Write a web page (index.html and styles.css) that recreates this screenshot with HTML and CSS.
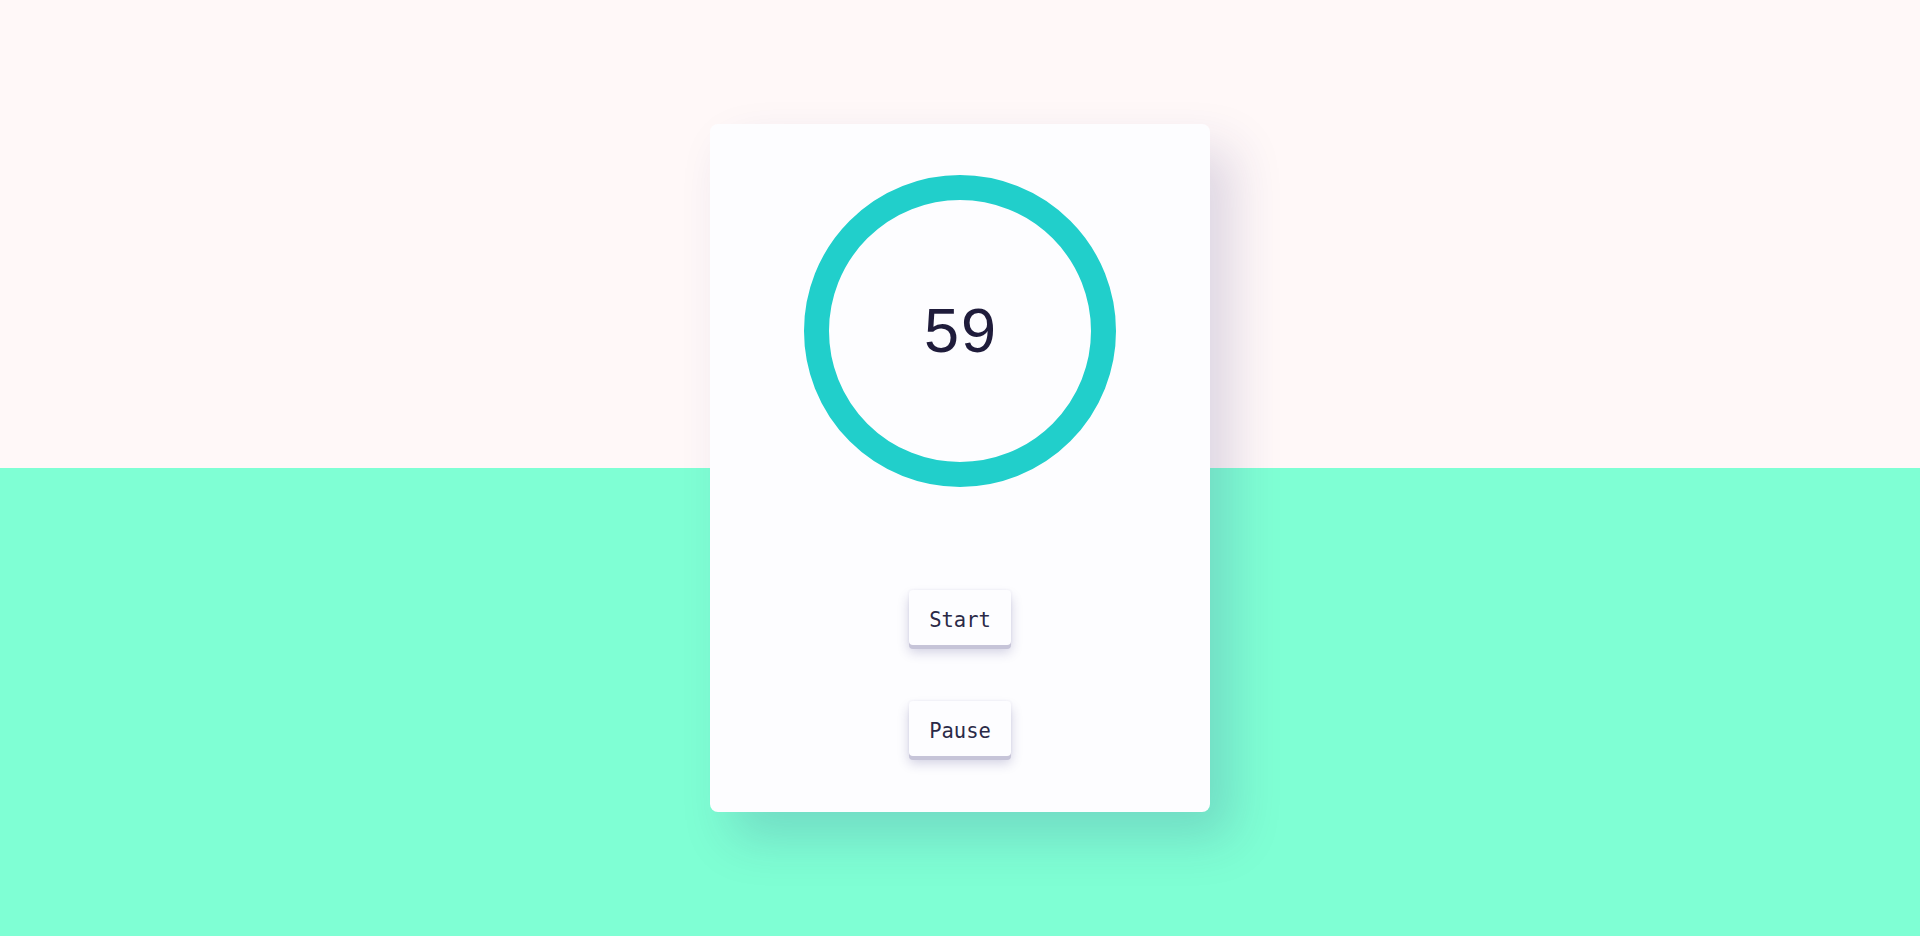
FILE: index.html
```html
<!DOCTYPE html>
<html>
<head>
<meta charset="utf-8">
<title>Timer</title>
<link rel="stylesheet" href="styles.css">
</head>
<body>
<main class="page">
  <section class="card">
    <div class="ring">
      <span class="count">59</span>
    </div>
    <div class="controls">
      <button class="btn">Start</button>
      <button class="btn">Pause</button>
    </div>
  </section>
</main>
</body>
</html>
```

FILE: styles.css
```css
html, body {
  margin: 0;
  padding: 0;
  height: 100%;
}
body {
  background: linear-gradient(to bottom, #fff8f8 0, #fff8f8 468px, #7fffd4 468px, #7fffd4 100%);
  font-family: "Liberation Sans", Arial, sans-serif;
}
.page {
  display: flex;
  justify-content: center;
  padding-top: 124px;
}
.card {
  width: 500px;
  height: 688px;
  box-sizing: border-box;
  background: #fdfdff;
  border-radius: 8px;
  box-shadow: 22px 26px 50px rgba(45, 40, 120, 0.17);
  display: flex;
  flex-direction: column;
  align-items: center;
  padding-top: 51px;
}
.ring {
  width: 312px;
  height: 312px;
  box-sizing: border-box;
  border: 25px solid #21cfcb;
  border-radius: 50%;
  display: flex;
  align-items: center;
  justify-content: center;
}
.count {
  font-family: "Liberation Sans", Arial, sans-serif;
  font-size: 63px;
  font-weight: 400;
  letter-spacing: 2px;
  padding-left: 2px;
  color: #1f1c3b;
  line-height: 1;
  margin-top: -2px;
}
.controls {
  display: flex;
  flex-direction: column;
  align-items: center;
  gap: 56px;
  margin-top: 103px;
}
.btn {
  width: 102px;
  height: 55px;
  box-sizing: border-box;
  border: none;
  border-radius: 4px;
  background: #fdfdff;
  font-family: "DejaVu Sans Mono", monospace;
  font-size: 20.5px;
  color: #2b2a47;
  padding: 5px 0 0;
  box-shadow: 0 4px 0 #c6c4d8, 0 7px 12px rgba(45, 40, 120, 0.22), 0 0 3px rgba(45, 40, 120, 0.08);
}
```
